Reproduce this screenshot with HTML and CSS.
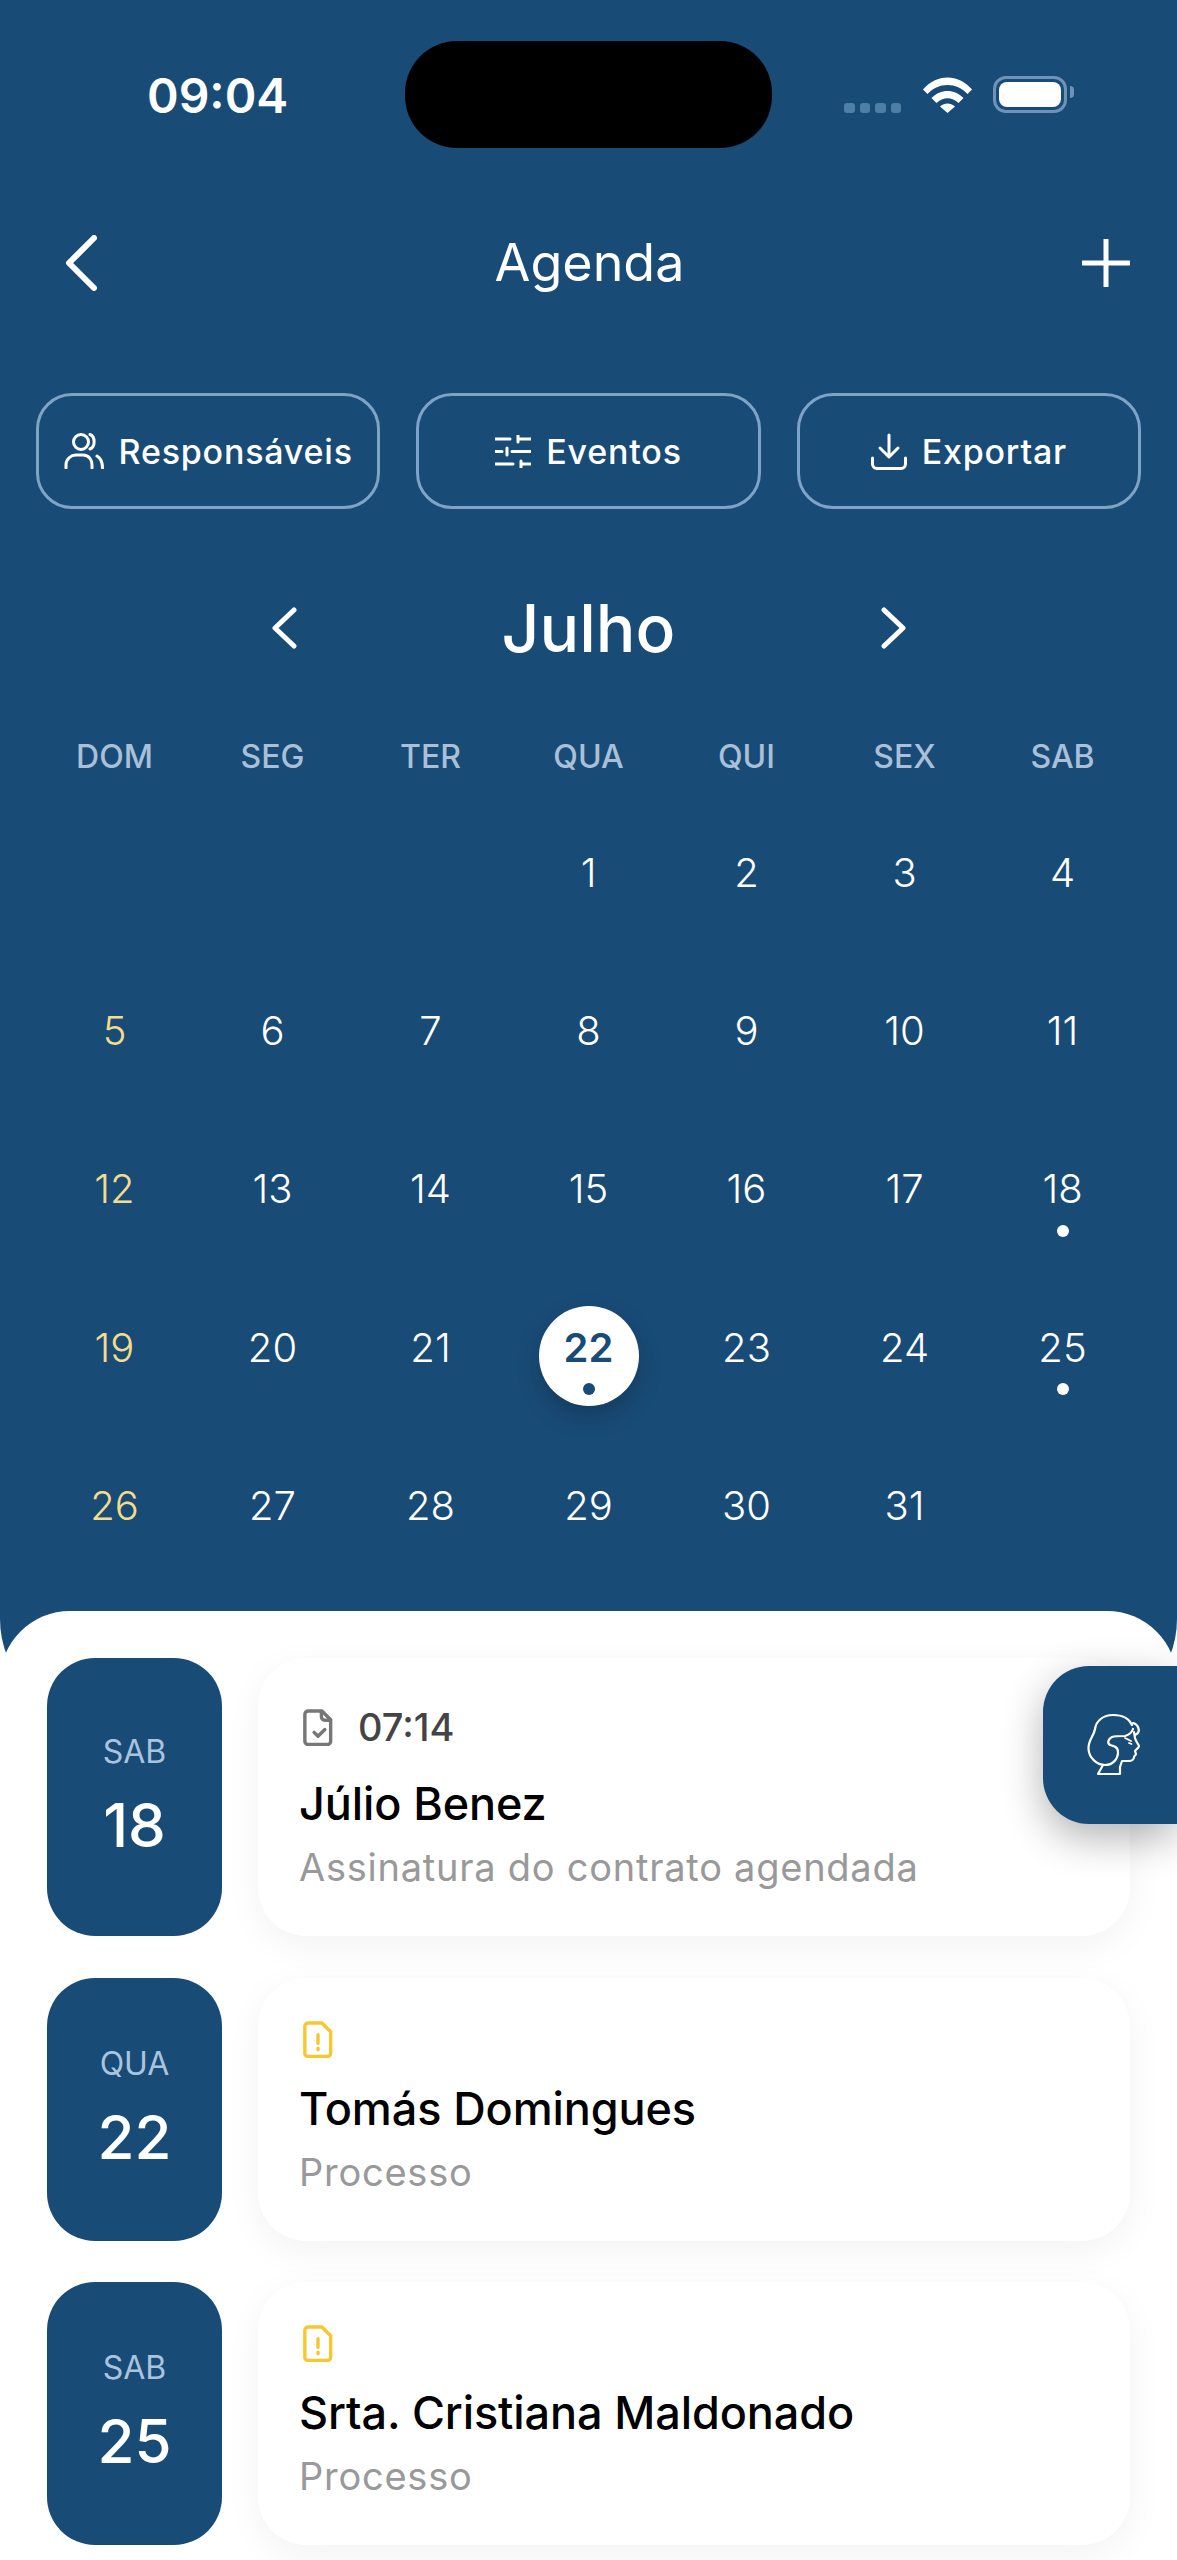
FILE: index.html
```html
<!DOCTYPE html>
<html lang="pt-BR">
<head>
    <meta charset="UTF-8">
    <meta name="viewport" content="width=device-width, initial-scale=1.0">
    <title>Agenda</title>
    <link rel="stylesheet" href="styles.css">
</head>
<body>
<div class="screen">
    <header class="top">
        <div class="status">
            <span class="clock">09:04</span>
            <div class="notch"></div>
            <div class="signal"><i></i><i></i><i></i><i></i></div>
            <svg class="wifi" viewBox="0 0 49 36"><path d="M0 12.500C13.500 -3.500 35.500 -3.500 49 12.500L44.500 17C33.500 5 15.500 5 4.500 17Z"/><path d="M8.500 21C17.500 11.500 31.500 11.500 40.500 21L35.500 26C29 19.500 20 19.500 13.500 26Z"/><path d="M17 29.500C21.500 25.500 27.500 25.500 32 29.500L24.500 36Z"/></svg>
            <div class="battery"><div class="battery-fill"></div></div>
        </div>

        <nav class="nav">
            <svg class="nav-back" viewBox="0 0 32 56"><path d="M29 3L4 28L29 53"/></svg>
            <h1>Agenda</h1>
            <svg class="nav-add" viewBox="0 0 48 48"><path d="M24 1V47M1 24H47"/></svg>
        </nav>

        <div class="tools">
            <button class="tool">
                <svg class="ic-users" viewBox="0 0 40 36"><circle cx="17" cy="9" r="7.500"/><path d="M26 1.500C31.500 3.500 31.500 14 26 16"/><path d="M2 35V32C2 26 7 22 12 22H19C25 22 28 27 28 32V35"/><path d="M33 23C36.500 25 38.500 29 38.500 35"/></svg>
                Responsáveis
            </button>
            <button class="tool">
                <svg class="ic-sliders" viewBox="0 0 36 33"><path d="M0 4H15M23 0V7M23 4H36M0 16.500H7M12 13V20M17 16.500H36M0 29H18M26 26V33M26 29H36"/></svg>
                Eventos
            </button>
            <button class="tool">
                <svg class="ic-export" viewBox="0 0 36 37"><path d="M18 2V24M9 15L18 24L27 15"/><path d="M1.500 25V31C1.500 33.500 3.500 35.500 6 35.500H30C32.500 35.500 34.500 33.500 34.500 31V25"/></svg>
                Exportar
            </button>
        </div>

        <div class="month">
            <svg class="month-arrow" viewBox="0 0 26 42"><path d="M23 3L4 21L23 39"/></svg>
            <div class="month-name">Julho</div>
            <svg class="month-arrow" viewBox="0 0 26 42"><path d="M3 3L22 21L3 39"/></svg>
        </div>

        <div class="weekdays">
            <span>DOM</span><span>SEG</span><span>TER</span><span>QUA</span><span>QUI</span><span>SEX</span><span>SAB</span>
        </div>

        <div class="days">
            <span></span><span></span><span></span>
            <span>1</span><span>2</span><span>3</span><span>4</span>
            <span class="sun">5</span><span>6</span><span>7</span><span>8</span><span>9</span><span>10</span><span>11</span>
            <span class="sun">12</span><span>13</span><span>14</span><span>15</span><span>16</span><span>17</span><span class="mark">18</span>
            <span class="sun">19</span><span>20</span><span>21</span><span class="mark today"><b>22</b></span><span>23</span><span>24</span><span class="mark">25</span>
            <span class="sun">26</span><span>27</span><span>28</span><span>29</span><span>30</span><span>31</span>
        </div>
    </header>

    <main class="sheet">
        <div class="assistant">
            <svg viewBox="0 0 80 80"><path d="M57 20C54 13 47 10 38 10C28 10 21 16 20 24C19 31 13 35 13.500 44C14 53 22 60 30 60C38 60 43 54 43 47C43 42 39 41 35 40C32 38 33 34 37 32C40 31 46 31 50 31C54 30 57 27 58 24"/><path d="M58 18C63 19 65 25 63 28L60 30"/><path d="M59 27L60 33C61 37 64 40 64 41C64 43 60 45 60 46L61 49C61 50 59 51 59 52C59 55 56 56 54 56H47L45 62V69H23L28 60"/><path class="thin" d="M50 33L56 36M54 38L56.500 39"/></svg>
        </div>

        <article class="event">
            <div class="event-date"><span>SAB</span><strong>18</strong></div>
            <div class="event-card">
                <div class="event-top">
                    <svg class="file grey" viewBox="0 0 30 38"><path d="M5 2H19L28 11V33C28 35 26.500 36.500 24.500 36.500H5C3 36.500 1.500 35 1.500 33V5.500C1.500 3.500 3 2 5 2Z"/><path d="M18.500 2.500V8C18.500 10 20 11.500 22 11.500H27.500"/><path d="M11 24L15 28L22 21"/></svg>
                    <span class="event-time">07:14</span>
                </div>
                <h2>Júlio Benez</h2>
                <p>Assinatura do contrato agendada</p>
            </div>
        </article>

        <article class="event">
            <div class="event-date"><span>QUA</span><strong>22</strong></div>
            <div class="event-card">
                <div class="event-top">
                    <svg class="file yellow" viewBox="0 0 30 38"><path d="M5 2H19L28 11V33C28 35 26.500 36.500 24.500 36.500H5C3 36.500 1.500 35 1.500 33V5.500C1.500 3.500 3 2 5 2Z"/><path d="M15 14V23M15 28V29.500"/></svg>
                </div>
                <h2>Tomás Domingues</h2>
                <p>Processo</p>
            </div>
        </article>

        <article class="event">
            <div class="event-date"><span>SAB</span><strong>25</strong></div>
            <div class="event-card">
                <div class="event-top">
                    <svg class="file yellow" viewBox="0 0 30 38"><path d="M5 2H19L28 11V33C28 35 26.500 36.500 24.500 36.500H5C3 36.500 1.500 35 1.500 33V5.500C1.500 3.500 3 2 5 2Z"/><path d="M15 14V23M15 28V29.500"/></svg>
                </div>
                <h2>Srta. Cristiana Maldonado</h2>
                <p>Processo</p>
            </div>
        </article>
    </main>
</div>
</body>
</html>
```

FILE: styles.css
```css
* {
    box-sizing: border-box;
}
body {
    margin: 0;
    background: #fff;
    font-family: "Inter", "Liberation Sans", sans-serif;
}
svg {
    display: block;
    flex: none;
    fill: none;
    stroke: #fff;
    stroke-linecap: round;
    stroke-linejoin: round;
}
.screen {
    height: 2560px;
    overflow: hidden;
}

/* blue top part */
.top {
    height: 1719px;
    background: #194b77;
    color: #fff;
    border-radius: 0 0 100px 100px;
}
.status {
    display: flex;
    align-items: flex-start;
    height: 148px;
    padding-top: 41px;
}
.clock {
    width: 258px;
    margin-left: 147px;
    margin-top: 25px;
    font-size: 48px;
    line-height: 60px;
    font-weight: 600;
}
.notch {
    width: 367px;
    height: 107px;
    background: #000;
    border-radius: 52px;
}
.signal {
    display: flex;
    gap: 5px;
    margin: 62px 0 0 72px;
}
.signal i {
    width: 10.500px;
    height: 10px;
    background: #4f7ea6;
    border-radius: 3px;
}
.wifi {
    width: 49px;
    height: 36px;
    margin: 36px 0 0 22px;
    fill: #fff;
    stroke: none;
}
.battery {
    position: relative;
    width: 74px;
    height: 37px;
    margin: 35px 0 0 21px;
    padding: 3px;
    border: 3px solid #6f93b8;
    border-radius: 13px;
}
.battery::after {
    content: "";
    position: absolute;
    right: -10px;
    top: 7px;
    width: 4px;
    height: 12px;
    background: #6f93b8;
    border-radius: 0 4px 4px 0;
}
.battery-fill {
    height: 100%;
    background: #fff;
    border-radius: 8px;
}

.nav {
    display: flex;
    align-items: center;
    justify-content: space-between;
    height: 60px;
    margin-top: 85px;
    padding: 0 47px 0 65px;
}
.nav h1 {
    margin: 0;
    font-size: 52px;
    line-height: 60px;
    font-weight: 400;
}
.nav-back {
    width: 32px;
    height: 56px;
    stroke-width: 6px;
}
.nav-add {
    width: 48px;
    height: 48px;
    stroke-width: 5px;
}

.tools {
    display: grid;
    grid-template-columns: repeat(3, 1fr);
    gap: 36px;
    margin-top: 100px;
    padding: 0 36px;
}
.tool {
    display: flex;
    align-items: center;
    justify-content: center;
    gap: 15px;
    height: 116px;
    padding: 0;
    background: none;
    border: 3px solid #7fa3c7;
    border-radius: 36px;
    color: #fff;
    font-family: inherit;
    font-size: 34px;
    font-weight: 500;
    letter-spacing: 0.8px;
}
.tool svg {
    stroke-width: 3px;
}
.ic-users {
    width: 40px;
    height: 36px;
}
.ic-sliders {
    width: 36px;
    height: 33px;
}
.ic-export {
    width: 36px;
    height: 37px;
}

.month {
    display: flex;
    align-items: center;
    justify-content: center;
    height: 80px;
    margin-top: 79px;
}
.month-name {
    width: 584px;
    text-align: center;
    font-size: 66px;
    font-weight: 500;
}
.month-arrow {
    width: 26px;
    height: 42px;
    stroke-width: 5px;
}

.weekdays,
.days {
    display: grid;
    grid-template-columns: repeat(7, 158px);
    justify-content: center;
}
.weekdays {
    align-items: center;
    height: 60px;
    margin-top: 58px;
    color: #a9c0d8;
    font-size: 32px;
    font-weight: 500;
    text-align: center;
}
.days {
    grid-auto-rows: 158.300px;
    margin-top: 7px;
    font-size: 40px;
    font-weight: 350;
}
.days span {
    position: relative;
    display: flex;
    align-items: center;
    justify-content: center;
}
.days b {
    position: relative;
    font-weight: 600;
}
.days .sun {
    color: #f5dc8a;
}
.days .mark::after {
    content: "";
    position: absolute;
    left: 50%;
    top: 115px;
    width: 12px;
    height: 12px;
    margin-left: -6px;
    background: #fff;
    border-radius: 50%;
}
.days .today {
    color: #194b77;
}
.days .today::before {
    content: "";
    position: absolute;
    left: 29px;
    top: 38px;
    width: 100px;
    height: 100px;
    background: #fff;
    border-radius: 50%;
    box-shadow: 0 10px 24px rgba(0, 0, 0, 0.2);
}
.days .today::after {
    background: #194b77;
}

/* white list over the blue */
.sheet {
    position: relative;
    display: flex;
    flex-direction: column;
    gap: 41.500px;
    height: 950px;
    margin-top: -108px;
    padding: 47px 47px 0;
    background: #fff;
    border-radius: 70px 70px 0 0;
}
.assistant {
    position: absolute;
    top: 55px;
    right: 0;
    z-index: 2;
    display: flex;
    align-items: center;
    width: 134px;
    height: 158px;
    padding-left: 32px;
    background: #194b77;
    border-radius: 46px 0 0 46px;
    box-shadow: 0 14px 40px rgba(0, 0, 0, 0.3);
}
.assistant svg {
    width: 80px;
    height: 80px;
    stroke-width: 2.200px;
}
.assistant .thin {
    stroke-width: 1.800px;
}
.event {
    display: flex;
    gap: 36px;
}
.event-date {
    display: flex;
    flex: none;
    flex-direction: column;
    align-items: center;
    justify-content: center;
    width: 175px;
    padding-bottom: 2px;
    background: #194b77;
    border-radius: 48px;
    color: #fff;
}
.event-date span {
    color: #a9c4de;
    font-size: 32px;
    line-height: 40px;
}
.event-date strong {
    margin-top: 17px;
    font-size: 60px;
    line-height: 72px;
    font-weight: 500;
}
.event-card {
    flex: 1;
    padding: 43px 41px 46px;
    background: #fff;
    border-radius: 48px;
    box-shadow: 0 10px 36px rgba(0, 0, 0, 0.05);
}
.event-top {
    display: flex;
    align-items: center;
    gap: 25px;
    padding-left: 4px;
}
.event-time {
    color: #444;
    font-size: 38px;
    line-height: 52px;
    font-weight: 500;
}
.file {
    width: 30px;
    height: 37px;
    stroke-width: 3.500px;
}
.file.grey {
    stroke: #777;
}
.file.yellow {
    stroke: #f5c92e;
}
.event-card h2 {
    margin: 24px 0 0;
    color: #000;
    font-size: 45px;
    line-height: 54px;
    font-weight: 500;
    letter-spacing: -0.1px;
}
.event-card p {
    margin: 13px 0 0;
    color: #999;
    font-size: 38px;
    line-height: 46px;
    letter-spacing: 0.75px;
}
```
